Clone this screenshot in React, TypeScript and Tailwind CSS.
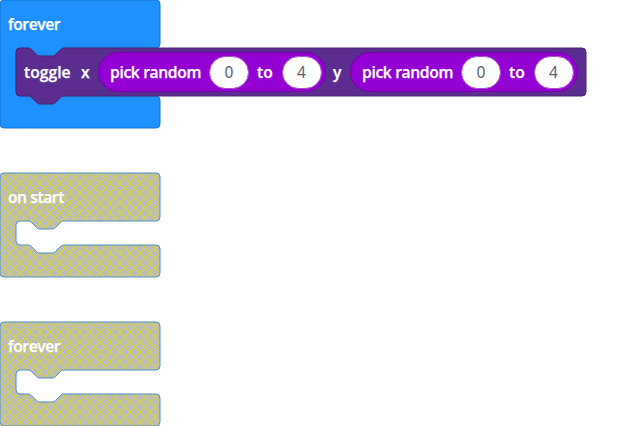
import React from "react";

const NOTCH = "c2,0 3,1 4,2 l4,4 c1,1 2,2 4,2 h12 c2,0 3,-1 4,-2 l4,-4 c1,-1 2,-2 4,-2";
const NOTCH_BACK = "c-2,0 -3,1 -4,2 l-4,4 c-1,1 -2,2 -4,2 h-12 c-2,0 -3,-1 -4,-2 l-4,-4 c-1,-1 -2,-2 -4,-2";

const container = (mouth: number) =>
  `M0,4 a4,4 0 0 1 4,-4 H156 a4,4 0 0 1 4,4 V44 a4,4 0 0 1 -4,4 H64 ${NOTCH_BACK} H20 a4,4 0 0 0 -4,4 v${mouth - 8} a4,4 0 0 0 4,4 H28 ${NOTCH} H156 a4,4 0 0 1 4,4 v24 a4,4 0 0 1 -4,4 H4 a4,4 0 0 1 -4,-4 z`;

// Diagonals in both directions, 10 units apart, long enough to cover a whole block.
const HATCH = Array.from({ length: 30 }, (_, i) => {
  const x = (i - 12) * 10;
  return `M${x},0 l120,120 M${x},120 l120,-120`;
}).join(" ");

function Num({ children }: { children: React.ReactNode }) {
  return (
    <span className="flex h-[33px] w-10 shrink-0 items-center justify-center rounded-full border border-[#a850cc] bg-white pt-px font-['Noto_Sans',sans-serif] text-[15.5px] font-normal text-[#575e75] [-webkit-text-stroke:0px]">
      {children}
    </span>
  );
}

function Label({ children, width }: { children: React.ReactNode; width: string }) {
  return <span className={`${width} shrink-0 whitespace-nowrap pt-0.5`}>{children}</span>;
}

function PickRandom() {
  return (
    <div className="flex h-10 w-[228px] shrink-0 items-center rounded-full border border-[#7600a8] bg-[#9400d3] pl-[11px]">
      <Label width="w-[99px] tracking-[-0.37px]">pick random</Label>
      <Num>0</Num>
      <Label width="w-[32.5px] pl-2">to</Label>
      <Num>4</Num>
    </div>
  );
}

function Toggle() {
  return (
    <div className="relative ml-4 h-12 w-[570px]">
      <svg className="absolute left-0 top-0 overflow-visible" width="570" height="56">
        <path
          d={`M0,4 a4,4 0 0 1 4,-4 H12 ${NOTCH} H566 a4,4 0 0 1 4,4 V44 a4,4 0 0 1 -4,4 H48 ${NOTCH_BACK} H4 a4,4 0 0 1 -4,-4 z`}
          fill="#5c2d91"
          stroke="#4a2474"
        />
      </svg>
      <div className="relative flex h-full items-center pl-2">
        <Label width="w-[57px]">toggle</Label>
        <Label width="w-[17px]">x</Label>
        <PickRandom />
        <Label width="w-6 pl-[7px]">y</Label>
        <PickRandom />
      </div>
    </div>
  );
}

function Block({ title, disabled, id, children }: { title: string; disabled?: boolean; id: string; children?: React.ReactNode }) {
  const mouth = children ? 48 : 24;
  const shape = container(mouth);
  return (
    <section className={children ? "relative h-32" : "relative h-[104px]"}>
      <svg className="absolute left-0 top-0 overflow-visible" width="160" height={mouth + 80}>
        <path d={shape} fill={disabled ? "#bbbbbb" : "#1e90ff"} />
        {disabled && (
          <>
            <clipPath id={id}>
              <path d={shape} />
            </clipPath>
            <path d={HATCH} clipPath={`url(#${id})`} stroke="#d6d633" strokeWidth="1.1" fill="none" />
          </>
        )}
        <path d={shape} fill="none" stroke={disabled ? "#4b8fcd" : "#1873cc"} />
      </svg>
      <h2 className="relative flex h-12 items-center pl-2 pt-0.5 tracking-[-0.45px]">{title}</h2>
      {children}
    </section>
  );
}

export default function App() {
  return (
    <main className="flex h-[426px] w-[638px] flex-col overflow-hidden bg-white font-['Open_Sans','Noto_Sans',sans-serif] text-[15.7px] font-semibold leading-none text-white [-webkit-text-stroke:0.25px_white]">
      <Block id="hatch-a" title="forever">
        <Toggle />
      </Block>
      <div className="h-[45px]" />
      <Block id="hatch-b" title="on start" disabled />
      <div className="h-[45px]" />
      <Block id="hatch-c" title="forever" disabled />
    </main>
  );
}
